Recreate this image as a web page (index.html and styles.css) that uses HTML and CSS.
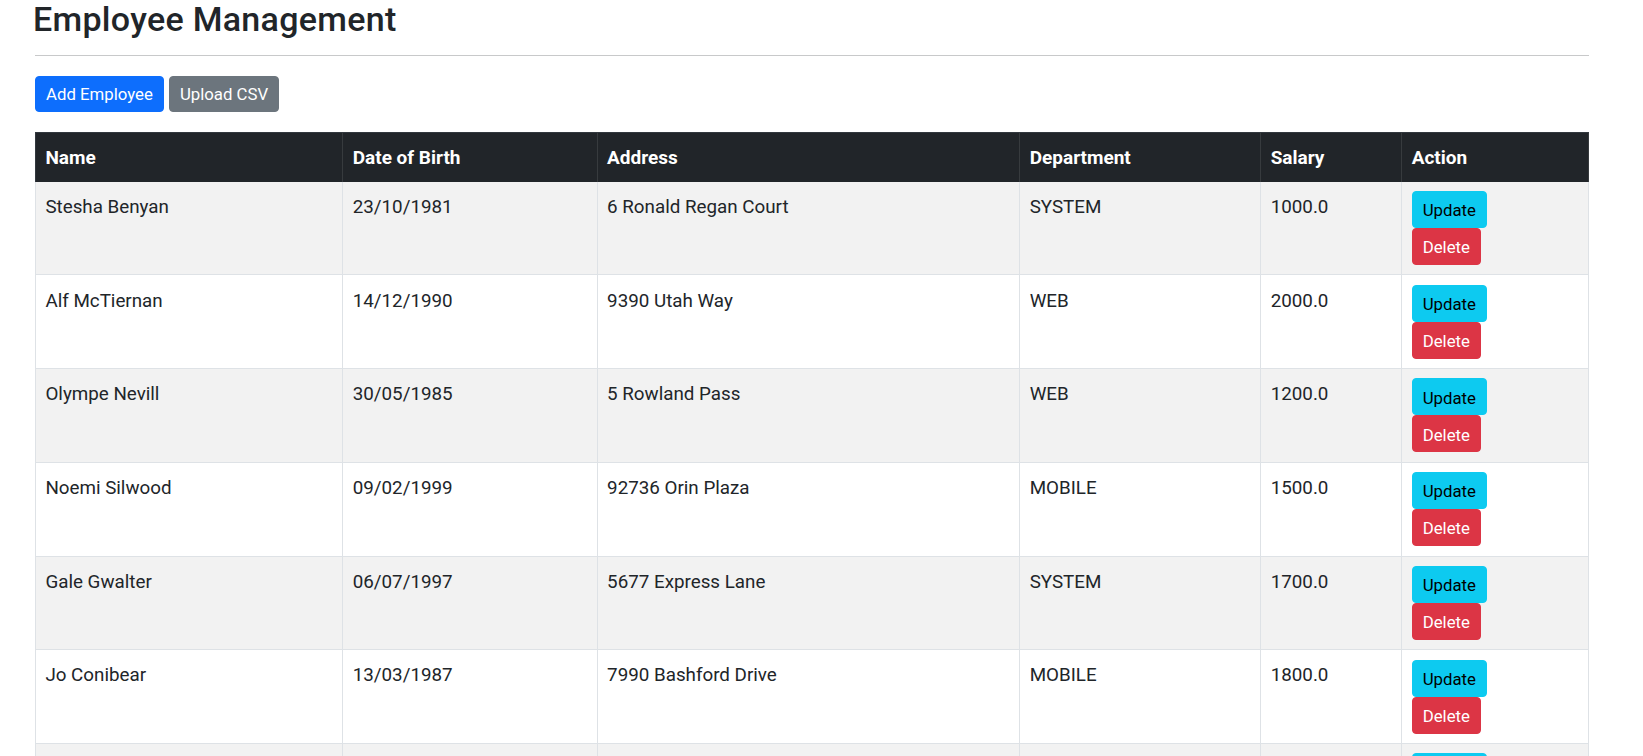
FILE: index.html
```html
<!DOCTYPE html>
<html lang="en">
<head>
<meta charset="utf-8">
<title>Employee Management</title>
<link rel="stylesheet" href="styles.css">
</head>
<body>
<div class="page">
  <h2 class="title">Employee Management</h2>
  <hr class="rule">
  <div class="toolbar">
    <button class="btn btn-primary">Add Employee</button>
    <button class="btn btn-secondary">Upload CSV</button>
  </div>
  <table class="grid">
    <colgroup>
      <col class="c-name">
      <col class="c-dob">
      <col class="c-addr">
      <col class="c-dept">
      <col class="c-sal">
      <col class="c-act">
    </colgroup>
    <thead>
      <tr><th>Name</th><th>Date of Birth</th><th>Address</th><th>Department</th><th>Salary</th><th>Action</th></tr>
    </thead>
    <tbody>
      <tr><td>Stesha Benyan</td><td>23/10/1981</td><td>6 Ronald Regan Court</td><td>SYSTEM</td><td>1000.0</td><td class="act"><div class="actions"><button class="btn btn-info">Update</button><button class="btn btn-danger">Delete</button></div></td></tr>
      <tr><td>Alf McTiernan</td><td>14/12/1990</td><td>9390 Utah Way</td><td>WEB</td><td>2000.0</td><td class="act"><div class="actions"><button class="btn btn-info">Update</button><button class="btn btn-danger">Delete</button></div></td></tr>
      <tr><td>Olympe Nevill</td><td>30/05/1985</td><td>5 Rowland Pass</td><td>WEB</td><td>1200.0</td><td class="act"><div class="actions"><button class="btn btn-info">Update</button><button class="btn btn-danger">Delete</button></div></td></tr>
      <tr><td>Noemi Silwood</td><td>09/02/1999</td><td>92736 Orin Plaza</td><td>MOBILE</td><td>1500.0</td><td class="act"><div class="actions"><button class="btn btn-info">Update</button><button class="btn btn-danger">Delete</button></div></td></tr>
      <tr><td>Gale Gwalter</td><td>06/07/1997</td><td>5677 Express Lane</td><td>SYSTEM</td><td>1700.0</td><td class="act"><div class="actions"><button class="btn btn-info">Update</button><button class="btn btn-danger">Delete</button></div></td></tr>
      <tr><td>Jo Conibear</td><td>13/03/1987</td><td>7990 Bashford Drive</td><td>MOBILE</td><td>1800.0</td><td class="act"><div class="actions"><button class="btn btn-info">Update</button><button class="btn btn-danger">Delete</button></div></td></tr>
      <tr><td>Ardis Spurdle</td><td>21/08/1992</td><td>41 Hermina Hill</td><td>WEB</td><td>1300.0</td><td class="act"><div class="actions"><button class="btn btn-info">Update</button><button class="btn btn-danger">Delete</button></div></td></tr>
    </tbody>
  </table>
</div>
</body>
</html>
```
FILE: styles.css
```css
html {
  overflow: hidden;
}
body {
  margin: 0;
  background: #fff;
  color: #212529;
  font-family: Roboto, "Liberation Sans", sans-serif;
}
.page {
  padding: 0 53.7px 0 35px;
}
.title {
  margin: 0 0 0 -2px;
  font-size: 34px;
  line-height: 38px;
  font-weight: 500;
  letter-spacing: 0.3px;
  color: #212529;
}
.rule {
  margin: 17px 0 20px;
  border: 0;
  border-top: 1px solid #c8c9ca;
  height: 0;
}
.toolbar {
  display: flex;
  gap: 5px;
  margin-bottom: 20px;
}
.btn {
  font-family: Roboto, "Liberation Sans", sans-serif;
  font-size: 16.8px;
  line-height: 24px;
  border: 1px solid transparent;
  border-radius: 4px;
  padding: 5.4px 10px 4.6px;
  cursor: pointer;
}
.btn-primary { background: #0d6efd; border-color: #0d6efd; color: #fff; }
.btn-secondary { background: #6c757d; border-color: #6c757d; color: #fff; }
.btn-info { background: #0dcaf0; border-color: #0dcaf0; color: #000; }
.btn-danger { background: #dc3545; border-color: #dc3545; color: #fff; }

.grid {
  width: 100%;
  table-layout: fixed;
  border-collapse: separate;
  border-spacing: 0;
}
.c-name { width: 308.3px; }
.c-dob { width: 254.4px; }
.c-addr { width: 422.6px; }
.c-dept { width: 241px; }
.c-sal { width: 141px; }
.c-act { width: 187px; }

.grid th {
  background: #212529;
  color: #fff;
  text-align: left;
  font-size: 19px;
  font-weight: 700;
  line-height: 28px;
  padding: 11px 9.4px 9.7px;
  border-top: 1px solid #32383e;
  border-right: 1px solid #373b3e;
}
.grid th:first-child {
  border-left: 1px solid #32383e;
}
.grid td {
  vertical-align: top;
  font-size: 18.8px;
  line-height: 28px;
  padding: 11.2px 9.4px 0;
  border-right: 1px solid #dee2e6;
  border-bottom: 1px solid #dee2e6;
}
.grid td:first-child {
  border-left: 1px solid #dee2e6;
}
.grid td.act {
  padding: 9.375px 9.4px;
}
.grid tbody tr:nth-child(odd) td {
  background: #f2f2f2;
}
.actions {
  display: flex;
  flex-direction: column;
  align-items: flex-start;
}
.actions .btn {
  padding: 6.2px 10px 4.8px;
}
```
